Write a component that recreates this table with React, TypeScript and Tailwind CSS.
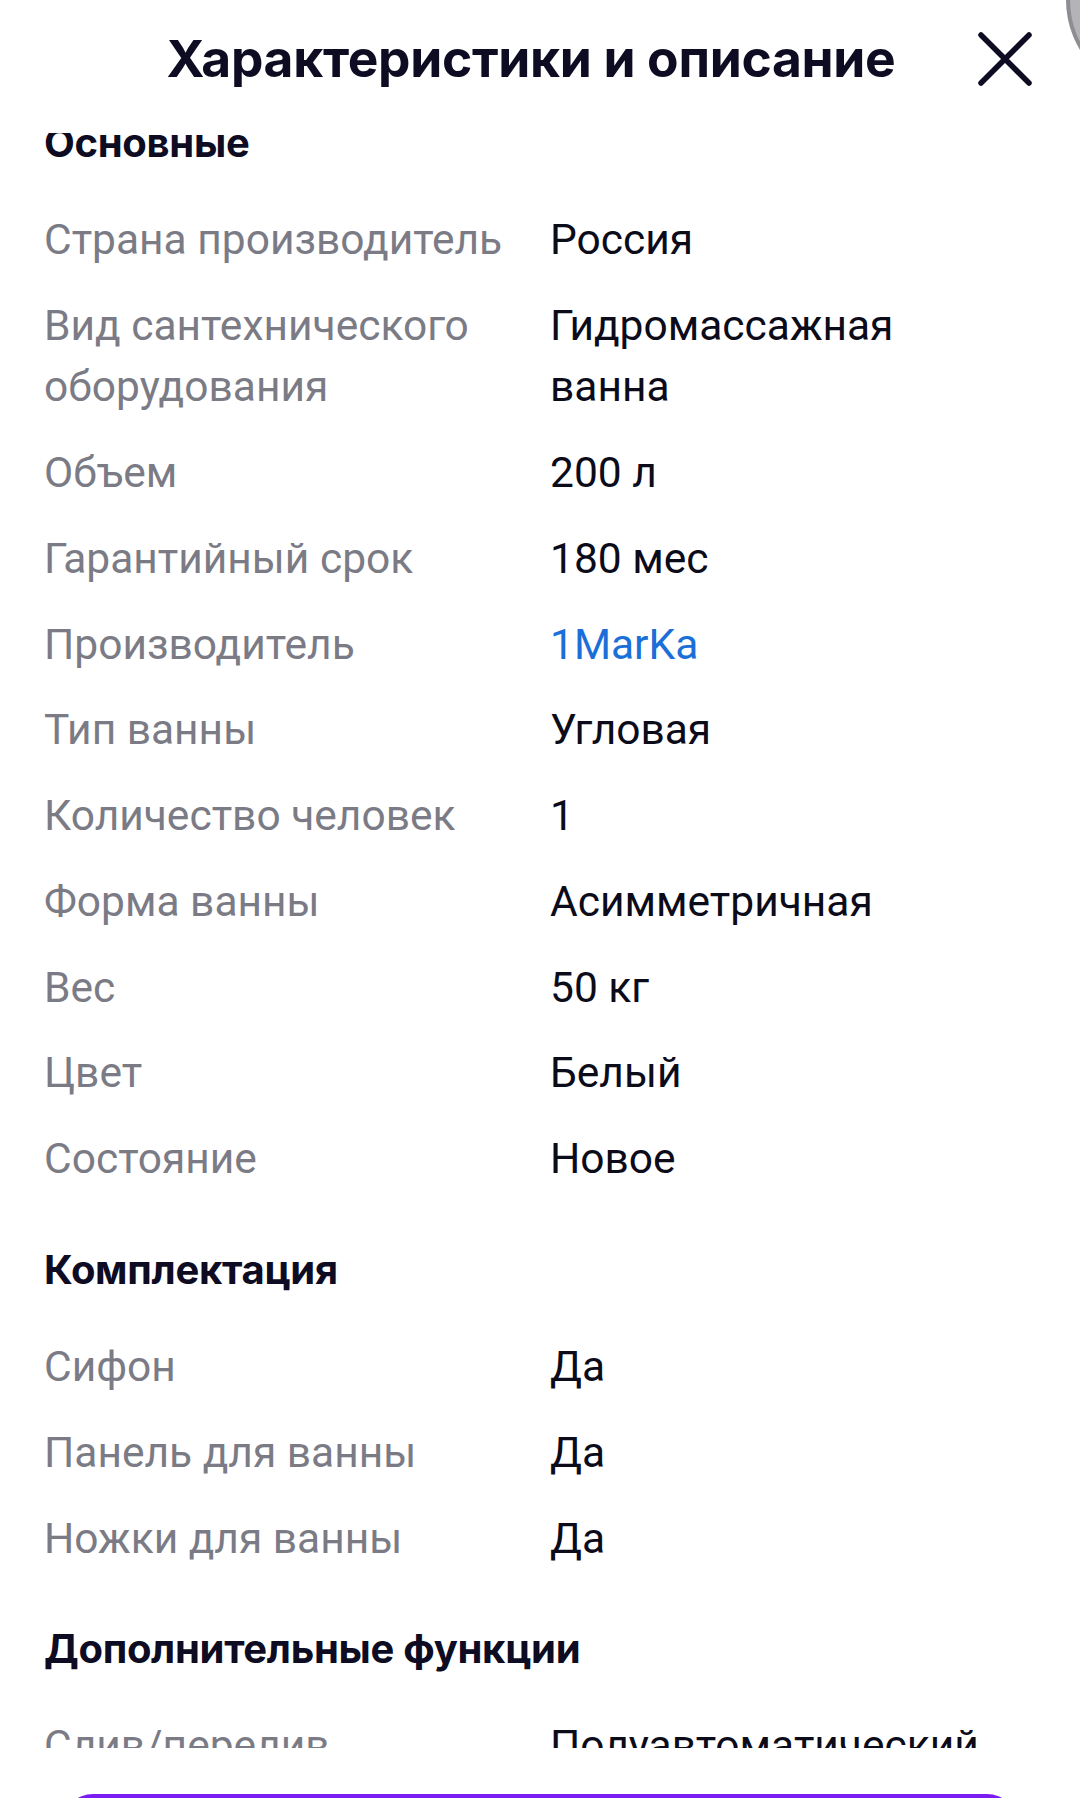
import React from "react";

type Row = { label: string; value: string; link?: boolean };

const sections: { title: string; rows: Row[] }[] = [
  {
    title: "Основные",
    rows: [
      { label: "Страна производитель", value: "Россия" },
      { label: "Вид сантехнического оборудования", value: "Гидромассажная ванна" },
      { label: "Объем", value: "200 л" },
      { label: "Гарантийный срок", value: "180 мес" },
      { label: "Производитель", value: "1MarKa", link: true },
      { label: "Тип ванны", value: "Угловая" },
      { label: "Количество человек", value: "1" },
      { label: "Форма ванны", value: "Асимметричная" },
      { label: "Вес", value: "50 кг" },
      { label: "Цвет", value: "Белый" },
      { label: "Состояние", value: "Новое" },
    ],
  },
  {
    title: "Комплектация",
    rows: [
      { label: "Сифон", value: "Да" },
      { label: "Панель для ванны", value: "Да" },
      { label: "Ножки для ванны", value: "Да" },
    ],
  },
  {
    title: "Дополнительные функции",
    rows: [
      { label: "Слив/перелив", value: "Полуавтоматический" },
      { label: "Подголовник", value: "Да" },
    ],
  },
];

export default function App() {
  return (
    <div className="relative w-[1080px] h-[1798px] overflow-hidden bg-white flex flex-col">
      {/* top-right gray edge */}
      <div className="absolute left-[1066px] top-[-96px] w-[192px] h-[192px] rounded-full bg-[#8e8e92]" />
      <div className="absolute left-[1070px] top-[-92px] w-[184px] h-[184px] rounded-full bg-[#b4b4b8]" />

      {/* header */}
      <div className="h-[133px] flex items-start shrink-0">
        <div className="w-[85px] shrink-0" />
        <div className="flex-1 h-[118px] flex items-center justify-center">
          <h1 className="font-['Inter',sans-serif] font-bold text-[51.5px] leading-none text-[#0d0c22] tracking-[-0.3px]">
            Характеристики и описание
          </h1>
        </div>
        <div className="w-[103px] h-[118px] shrink-0 flex items-center">
          <svg width="56" height="56" viewBox="0 0 56 56" fill="none">
            <path d="M4 4 L52 52 M52 4 L4 52" stroke="#0d0c22" strokeWidth="5.5" strokeLinecap="round" />
          </svg>
        </div>
      </div>

      {/* scroll viewport */}
      <div className="h-[1615px] overflow-hidden shrink-0">
        <div className="-mt-[15px] px-[44px]">
          {sections.map((s, i) => (
            <div key={s.title} className={i === 0 ? "" : "pt-[43px]"}>
              <h2 className="font-['Inter',sans-serif] font-bold text-[40px] leading-[50px] text-[#0d0c22] pb-[29px] tracking-[-0.3px]">
                {s.title}
              </h2>
              {s.rows.map((r) => (
                <div key={r.label} className="flex py-[12.4px] font-['Roboto',sans-serif] text-[42.5px] leading-[61px]">
                  <div className="w-[506px] shrink-0 pr-[20px] text-[#7b7b86]">{r.label}</div>
                  <div className={"w-[430px] " + (r.link ? "text-[#1b6fd8]" : "text-[#0b0b1a]")}>{r.value}</div>
                </div>
              ))}
            </div>
          ))}
        </div>
      </div>

      {/* footer */}
      <div className="flex-1 px-[63px] pt-[46px]">
        <div className="h-[110px] rounded-[30px] bg-[#7a1cf2]" />
      </div>
    </div>
  );
}
